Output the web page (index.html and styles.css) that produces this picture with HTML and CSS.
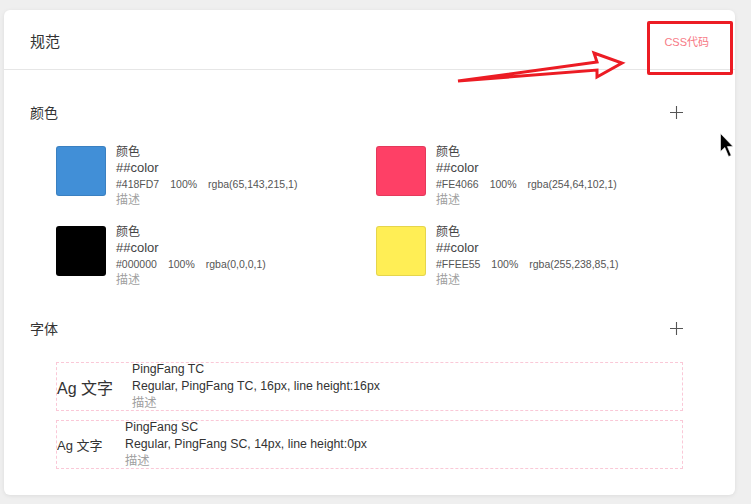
FILE: index.html
```html
<!DOCTYPE html>
<html lang="zh-CN">
<head>
    <meta charset="UTF-8">
    <meta name="viewport" content="width=device-width, initial-scale=1.0">
    <title>规范</title>
    <link rel="stylesheet" href="styles.css">
</head>
<body>
    <div class="card">
        <div class="card-header">
            <span class="card-title">规范</span>
            <a class="css-link" href="#">CSS代码</a>
        </div>

        <div class="section">
            <div class="section-head">
                <span>颜色</span>
                <svg class="plus" width="13" height="13" viewBox="0 0 13 13"><path d="M6.5 0V13M0 6.5H13" stroke="#555" stroke-width="1.1"/></svg>
            </div>
            <div class="color-grid">
                <div class="color-item">
                    <div class="swatch" style="background:#418FD7"></div>
                    <div class="color-info">
                        <div class="c-name">颜色</div>
                        <div class="c-var">##color</div>
                        <div class="c-values"><span>#418FD7</span><span>100%</span><span>rgba(65,143,215,1)</span></div>
                        <div class="c-desc">描述</div>
                    </div>
                </div>
                <div class="color-item">
                    <div class="swatch" style="background:#FE4066"></div>
                    <div class="color-info">
                        <div class="c-name">颜色</div>
                        <div class="c-var">##color</div>
                        <div class="c-values"><span>#FE4066</span><span>100%</span><span>rgba(254,64,102,1)</span></div>
                        <div class="c-desc">描述</div>
                    </div>
                </div>
                <div class="color-item">
                    <div class="swatch" style="background:#000000"></div>
                    <div class="color-info">
                        <div class="c-name">颜色</div>
                        <div class="c-var">##color</div>
                        <div class="c-values"><span>#000000</span><span>100%</span><span>rgba(0,0,0,1)</span></div>
                        <div class="c-desc">描述</div>
                    </div>
                </div>
                <div class="color-item">
                    <div class="swatch" style="background:#FFEE55"></div>
                    <div class="color-info">
                        <div class="c-name">颜色</div>
                        <div class="c-var">##color</div>
                        <div class="c-values"><span>#FFEE55</span><span>100%</span><span>rgba(255,238,85,1)</span></div>
                        <div class="c-desc">描述</div>
                    </div>
                </div>
            </div>
        </div>

        <div class="section section-fonts">
            <div class="section-head">
                <span>字体</span>
                <svg class="plus" width="13" height="13" viewBox="0 0 13 13"><path d="M6.5 0V13M0 6.5H13" stroke="#555" stroke-width="1.1"/></svg>
            </div>
            <div class="font-list">
                <div class="font-item">
                    <div class="font-sample big">Ag 文字</div>
                    <div class="font-info">
                        <div>PingFang TC</div>
                        <div>Regular, PingFang TC, 16px, line height:16px</div>
                        <div class="f-desc">描述</div>
                    </div>
                </div>
                <div class="font-item">
                    <div class="font-sample small">Ag 文字</div>
                    <div class="font-info">
                        <div>PingFang SC</div>
                        <div>Regular, PingFang SC, 14px, line height:0px</div>
                        <div class="f-desc">描述</div>
                    </div>
                </div>
            </div>
        </div>
    </div>

    <!-- 标注 -->
    <div class="mark-box"></div>
    <svg class="mark-arrow" width="751" height="504" viewBox="0 0 751 504">
        <path d="M458 81 L597 62 L594 53 L622 63 L597 77 L597 70 Z" fill="none" stroke="#ec1c24" stroke-width="3" stroke-linejoin="miter"/>
    </svg>
    <svg class="cursor" width="14" height="25" viewBox="0 0 14 25">
        <path d="M0.5 0.5 L0.5 18.5 L4.8 14.5 L8.6 23.5 L11.2 22.4 L7.4 13.6 L13 13.6 Z" fill="#000" stroke="#fff" stroke-width="0.6"/>
    </svg>
</body>
</html>
```

FILE: styles.css
```css
* {
    box-sizing: border-box;
    margin: 0;
    padding: 0;
}

body {
    font-family: "Liberation Sans", "Noto Sans CJK SC", sans-serif;
    background-color: #efefef;
    padding: 10px 16px 0 4px;
    height: 504px;
    overflow: hidden;
    position: relative;
    color: #333;
}

.card {
    background-color: #fff;
    border-radius: 6px;
    box-shadow: 0 1px 4px rgba(0,0,0,0.08);
    width: 731px;
    padding-bottom: 26px;
}

.card-header {
    height: 60px;
    border-bottom: 1px solid #e6e6e6;
    display: flex;
    align-items: center;
    justify-content: space-between;
    padding: 2px 26px 0 26px;
}

.card-title {
    font-size: 15px;
    color: #333;
}

.css-link {
    font-size: 11px;
    color: #f77a86;
    text-decoration: none;
}

.section {
    padding: 31px 52px 0 26px;
}

.section-fonts {
    padding-top: 29px;
}

.section-head {
    display: flex;
    justify-content: space-between;
    align-items: center;
    height: 22px;
    font-size: 14px;
    color: #333;
}

/* 颜色 */
.color-grid {
    margin: 21px 0 0 26px;
    display: grid;
    grid-template-columns: 320px 1fr;
    row-gap: 16px;
}

.color-item {
    display: flex;
    align-items: flex-start;
}

.swatch {
    width: 50px;
    height: 50px;
    margin-top: 2px;
    margin-right: 10px;
    border-radius: 3px;
    border: 1px solid rgba(0,0,0,0.1);
}

.color-info {
    line-height: 16px;
}

.c-name {
    font-size: 12px;
    color: #444;
}

.c-var {
    font-size: 13px;
    color: #444;
}

.c-values {
    font-size: 10.5px;
    color: #555;
}

.c-values span {
    margin-right: 11px;
}

.c-desc {
    font-size: 12px;
    color: #a0a0a0;
}

/* 字体 */
.font-list {
    margin: 23px 0 0 26px;
    display: flex;
    flex-direction: column;
    gap: 9px;
}

.font-item {
    height: 49px;
    border: 1px dashed #fac8d7;
    display: flex;
    align-items: center;
}

.font-sample {
    color: #333;
    flex-shrink: 0;
}

.font-sample.big {
    font-size: 16px;
    width: 75px;
}

.font-sample.small {
    font-size: 13px;
    width: 68px;
}

.font-info {
    font-size: 12.3px;
    line-height: 17px;
    color: #333;
}

.f-desc {
    color: #a0a0a0;
}

/* 标注 */
.mark-box {
    position: absolute;
    left: 647px;
    top: 21px;
    width: 86px;
    height: 54px;
    border: 3px solid #ec1c24;
    border-radius: 2px;
}

.mark-arrow {
    position: absolute;
    left: 0;
    top: 0;
    pointer-events: none;
}

.cursor {
    position: absolute;
    left: 720px;
    top: 133px;
}
```
